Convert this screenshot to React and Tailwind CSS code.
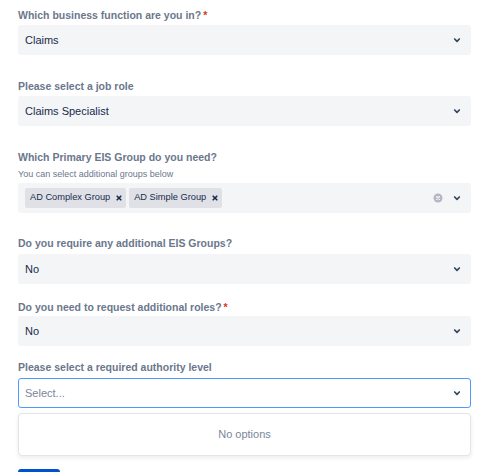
const font = { fontFamily: '"Liberation Sans", Arial, sans-serif' };

function Chevron() {
  return (
    <svg className="h-[8px] w-[8px]" viewBox="0 0 24 24" fill="none" stroke="#344563" strokeWidth={5} strokeLinecap="round" strokeLinejoin="round">
      <path d="M5 9l7 7 7-7" />
    </svg>
  );
}

function Label({ children, required, className = '' }) {
  return (
    <div className={`h-4 text-[10.5px] font-bold leading-4 text-[#6B778C] ${className}`}>
      {children}
      {required && <span className="ml-[2px] text-[#DE350B]">*</span>}
    </div>
  );
}

function Select({ value, focused, className = '' }) {
  return (
    <div
      className={`flex h-[30px] items-center justify-between rounded-[3px] ${
        focused ? 'border border-[#4C9AFF] bg-white pl-[6px] pr-[9px]' : 'bg-[#F4F5F7] pl-[7px] pr-[10px]'
      } ${className}`}
    >
      <span className={`text-[11px] ${focused ? 'text-[#7A869A]' : 'text-[#172B4D]'}`}>{value}</span>
      <Chevron />
    </div>
  );
}

function Tag({ children }) {
  return (
    <div className="flex h-5 items-center gap-[6px] rounded-[2px] bg-[#DFE1E6] pl-[5px] pr-[4px] text-[9.25px] text-[#172B4D]">
      <span>{children}</span>
      <svg className="h-[6px] w-[6px]" viewBox="0 0 10 10" fill="none" stroke="#172B4D" strokeWidth={2.6} strokeLinecap="round">
        <path d="M2 2l6 6M8 2l-6 6" />
      </svg>
    </div>
  );
}

export default function App() {
  return (
    <div className="h-[472px] overflow-hidden bg-white pl-[18px] pr-[23px] pt-[7px]" style={font}>
      <Label required>Which business function are you in?</Label>
      <Select value="Claims" className="mt-[2px]" />

      <Label className="mt-[23px]">Please select a job role</Label>
      <Select value="Claims Specialist" className="mt-[2px]" />

      <Label className="mt-[23px]">Which Primary EIS Group do you need?</Label>
      <div className="mt-[3px] h-3 text-[9px] leading-3 text-[#6B778C]">You can select additional groups below</div>
      <div className="mt-[3px] flex h-[30px] items-center justify-between rounded-[3px] bg-[#F4F5F7] pl-[7px] pr-[10px]">
        <div className="flex items-center gap-[3px]">
          <Tag>AD Complex Group</Tag>
          <Tag>AD Simple Group</Tag>
        </div>
        <div className="flex items-center gap-[10px]">
          <svg className="h-[10px] w-[10px]" viewBox="0 0 20 20">
            <circle cx="10" cy="10" r="9" fill="#B3B9C4" />
            <path d="M7 7l6 6M13 7l-6 6" stroke="#F4F5F7" strokeWidth="2.2" strokeLinecap="round" />
          </svg>
          <Chevron />
        </div>
      </div>

      <Label className="mt-[22px]">Do you require any additional EIS Groups?</Label>
      <Select value="No" className="mt-[3px]" />

      <Label required className="mt-[15px]">Do you need to request additional roles?</Label>
      <Select value="No" className="mt-[1px]" />

      <Label className="mt-[13px]">Please select a required authority level</Label>
      <Select value="Select..." focused className="mt-[3px]" />

      <div className="mt-[5px] flex h-[43px] items-center justify-center rounded-[4px] border border-[#E3E5E8] bg-white text-[11px] text-[#7A869A] shadow-[0_2px_4px_rgba(9,30,66,0.08)]">
        No options
      </div>

      <div className="mt-[13px] h-8 w-[42px] rounded-[3px] bg-[#0052CC]" />
    </div>
  );
}
